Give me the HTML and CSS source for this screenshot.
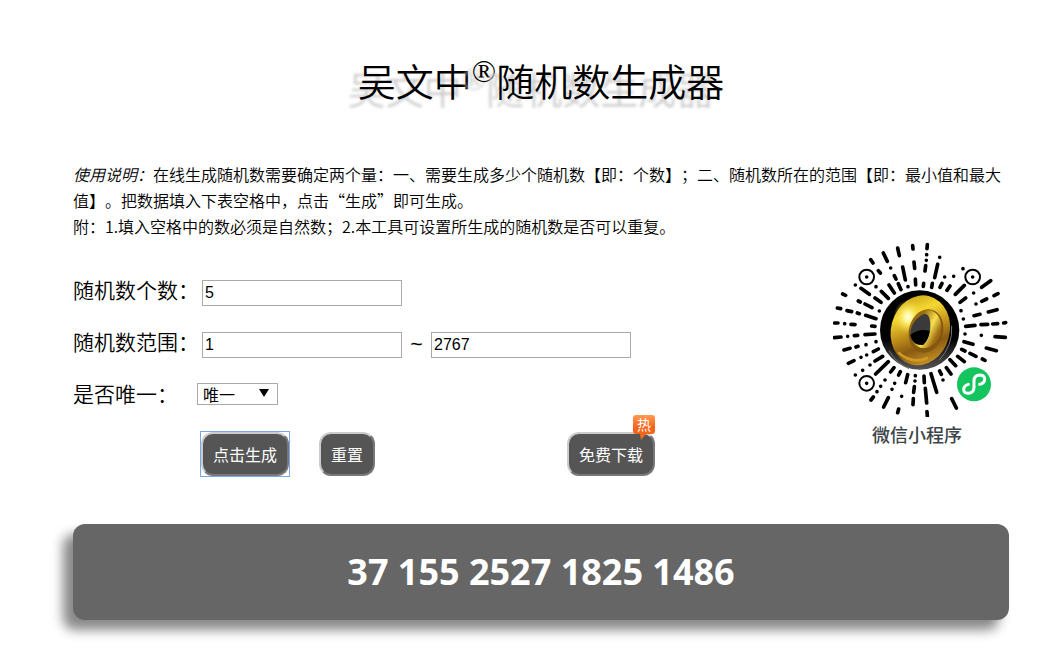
FILE: index.html
```html
<!DOCTYPE html>
<html lang="zh-CN">
  <head>
    <meta charset="UTF-8" />
    <meta name="viewport" content="width=device-width, initial-scale=1.0" />
    <title>吴文中®随机数生成器</title>
    <link rel="stylesheet" href="styles.css">
  </head>
  <body>
    <h1>吴文中<sup>®</sup>随机数生成器</h1>

    <p class="intro">
      <em>使用说明：</em>在线生成随机数需要确定两个量：一、需要生成多少个随机数【即：个数】；二、随机数所在的范围【即：最小值和最大值】。把数据填入下表空格中，点击“生成”即可生成。<br />附：1.填入空格中的数必须是自然数；2.本工具可设置所生成的随机数是否可以重复。
    </p>

    <div class="main">
      <form id="random-form" class="form">
        <div class="row">
          <label for="count">随机数个数：</label>
          <input type="text" id="count" value="5" />
        </div>
        <div class="row">
          <label for="min">随机数范围：</label>
          <input type="text" id="min" value="1" />
          <span class="tilde">~</span>
          <input type="text" id="max" value="2767" aria-label="最大值" />
        </div>
        <div class="row">
          <label for="unique" class="short">是否唯一：</label>
          <div class="select">
            <select id="unique">
              <option value="1">唯一</option>
              <option value="0">不唯一</option>
            </select>
            <svg viewBox="0 0 10 8"><path d="M0 0h10L5 8z" /></svg>
          </div>
        </div>
        <div class="buttons">
          <button type="submit" class="btn active">点击生成</button>
          <button type="reset" class="btn">重置</button>
          <button type="button" class="btn download">
            免费下载
            <svg class="hot" viewBox="0 0 22 25">
              <defs>
                <linearGradient id="hot-bg" x1="0" y1="0" x2="0" y2="1">
                  <stop offset="0" stop-color="#ff9a55" />
                  <stop offset="0.5" stop-color="#f8641a" />
                  <stop offset="1" stop-color="#f06a1c" />
                </linearGradient>
              </defs>
              <path d="M3 0h16q3 0 3 3v13q0 3-3 3h-6l-5 6-1-6H3q-3 0-3-3V3q0-3 3-3z" fill="url(#hot-bg)" />
              <text x="11" y="15">热</text>
            </svg>
          </button>
        </div>
      </form>

      <figure class="qrcode">
        <svg viewBox="24 16 528 528" role="img" aria-label="微信小程序码">
          <defs>
            <linearGradient id="gold" x1="0.1" y1="0" x2="0.7" y2="1">
              <stop offset="0" stop-color="#c2940f" />
              <stop offset="0.3" stop-color="#f3d831" />
              <stop offset="0.55" stop-color="#c08f1a" />
              <stop offset="0.75" stop-color="#8a5a12" />
              <stop offset="1" stop-color="#c99425" />
            </linearGradient>
            <linearGradient id="gold-inner" x1="0" y1="0" x2="1" y2="0.3">
              <stop offset="0.3" stop-color="#9a6c10" />
              <stop offset="0.7" stop-color="#f8e050" />
              <stop offset="1" stop-color="#a06c14" />
            </linearGradient>
            <radialGradient id="shine">
              <stop offset="0" stop-color="#fffff0" />
              <stop offset="0.3" stop-color="#fff48a" />
              <stop offset="1" stop-color="#f2d32c" stop-opacity="0" />
            </radialGradient>
            <linearGradient id="floor" x1="0" y1="0" x2="0" y2="1">
              <stop offset="0.6" stop-color="#000" />
              <stop offset="1" stop-color="#555" />
            </linearGradient>
          </defs>

          <!-- rays, clockwise from the top -->
          <path class="rays" d="
            M307 27L306 39M305 57v0M304 74v0M302 90L300 106M296 143L295 152
            M344 65v0M338 86L329 126M322 143L320 155
            M359 124v0M351 143L345 155
            M414 99v0M386 122v0M375 151L366 164
            M418 149L391 176
            M497 135L470 155M446 172v0M422 187L405 200
            M519 174L507 180M485 190L470 197M453 205v0M408 225v0
            M516 222L490 229M465 236L447 240M415 250v0
            M542 261L536 262M518 264L503 265M488 266L468 267M450 269L422 272
            M541 305L510 303M469 299v0M420 295v0
            M514 345L484 337M444 326L417 318
            M480 374L472 370M453 362L435 353M420 346L410 341
            M418 378L398 362M392 390L375 372M378 415L364 396
            M394 517L380 489M354 433v0M349 416L344 406
            M335 470L318 414
            M307 541L306 528M305 502L301 458M298 441L297 421
            M264 507L265 489M266 470L268 453M270 436v0M271 420v0
            M218 531L221 520M230 482v0M242 441L248 417
            M176 514L190 486M201 461v0M209 443v0M221 418L226 408
            M138 493L145 484M156 468v0M167 452v0M180 433v0M197 409L207 396
            M152 415L190 378
            M91 418v0M113 404v0M135 388v0M150 376L173 362
            M70 383L87 375M108 365v0M125 358v0M145 348L160 340
            M57 343L75 338M93 334L99 332M123 327v0M153 318v0
            M28 306L48 304M68 302v0M88 300L98 299M120 297L150 295
            M29 262L39 262M59 264v0M78 266L90 267M140 271L150 272
            M37 217L47 219M66 225L80 228M97 232L103 234M122 239L153 249
            M53 175L62 179M100 196L106 199M120 205L141 216M163 226v0
            M91 148v0M108 158L133 176M150 187L168 200
            M153 153v0M169 167L190 188
            M137 72L144 82M160 105L166 112M192 148L208 172
            M175 52L187 77M197 97v0M208 120L213 130M220 144L228 162
            M218 37L223 60M233 94L241 133M249 153v0
            M263 30L264 40M267 79L269 98M271 130L272 148" />

          <g class="finders">
            <circle cx="125" cy="124" r="22" />
            <circle cx="443" cy="124" r="22" />
            <circle cx="125" cy="443" r="22" />
          </g>
          <path class="rays" d="M125 124v0M443 124v0M125 443v0" />

          <!-- golden ring -->
          <circle cx="284" cy="283" r="119" fill="url(#floor)" />
          <path d="M192 345q22 38 60 54M380 270q4 60-38 104" fill="none" stroke="#777" stroke-width="3" />
          <ellipse cx="286" cy="284" rx="88" ry="106" transform="rotate(15 286 284)" fill="url(#gold)" />
          <ellipse cx="249" cy="244" rx="44" ry="52" fill="url(#shine)" />
          <ellipse cx="303" cy="286" rx="51" ry="66" transform="rotate(15 303 286)" fill="#85580f" />
          <ellipse cx="302" cy="280" rx="46" ry="58" transform="rotate(15 302 280)" fill="url(#gold-inner)" />
          <path d="M256 300q-2-40 38-64q20-6 22 28q2 40-22 64q-34 0-38-28z" fill="#3a3a3a" />
          <path d="M256 298q28-22 58-12q-3 26-20 42q-32 0-38-30z" fill="#000" />
          <path d="M222 352q38 34 84 16" fill="none" stroke="#cf9a24" stroke-width="8" stroke-linecap="round" />

          <!-- mini program mark -->
          <circle cx="447" cy="446" r="51" fill="#13c45f" />
          <path d="M430 446q-14 4-14 15q1 13 16 12q15-2 15-18v-20q0-15 16-17q16 0 16 13q-1 12-15 15" fill="none" stroke="#fff" stroke-width="9" stroke-linecap="round" />
        </svg>
        <figcaption>微信小程序</figcaption>
      </figure>
    </div>

    <output class="result" form="random-form">37 155 2527 1825 1486</output>
  </body>
</html>
```
FILE: styles.css
```css
* {
  box-sizing: border-box;
}
body {
  margin: 0;
  padding: 52px 37px 30px 73px;
  background: #fff;
  color: #000;
  font-family: "Open Sans", "Noto Sans CJK SC", sans-serif;
  font-size: 16px;
  overflow-x: hidden;
}
h1 {
  margin: 0 0 53px;
  font-family: "Noto Sans CJK SC", sans-serif;
  font-size: 38px;
  font-weight: 350;
  line-height: 56px;
  text-align: center;
  text-shadow: -10px 8px 3px #ccc;
}
h1 sup {
  font-family: "Liberation Serif", serif;
  font-size: 32px;
  line-height: 0;
  vertical-align: 14px;
}
.intro {
  margin: 0;
  font-family: "Noto Sans CJK SC", sans-serif;
  font-weight: 350;
  line-height: 26px;
  text-spacing-trim: space-all;
}
.main {
  display: flex;
  justify-content: space-between;
  align-items: flex-start;
}
.form {
  padding-top: 28px;
}
.row {
  display: flex;
  align-items: center;
  height: 52px;
}
.row label {
  width: 129px;
  padding-bottom: 8px;
  font-family: "Noto Sans CJK SC", sans-serif;
  font-size: 21px;
  font-weight: 350;
  line-height: 32px;
  white-space: nowrap;
}
.row label.short {
  width: 124px;
}
.row input {
  width: 200px;
  height: 26px;
  padding: 0 2px;
  border: 1px solid #a9a9a9;
  background: #fff;
  font-family: "Liberation Sans", sans-serif;
  font-size: 16px;
}
.tilde {
  width: 29px;
  padding-bottom: 4px;
  font-size: 22px;
  text-align: center;
}
.select {
  position: relative;
  margin-bottom: 6px;
}
.select select {
  display: block;
  width: 81px;
  height: 22px;
  padding: 0 5px;
  border: 1px solid #a9a9a9;
  border-radius: 0;
  background: #fff;
  appearance: none;
  font-family: "Noto Sans CJK SC", sans-serif;
  font-size: 16px;
  line-height: 20px;
}
.select svg {
  position: absolute;
  top: 6px;
  right: 9px;
  width: 10px;
  height: 8px;
  pointer-events: none;
}
.buttons {
  display: flex;
  padding: 9px 0 0 128px;
}
.btn {
  position: relative;
  height: 44px;
  margin-right: 30px;
  padding: 0 10px;
  border: 2px outset #ccc;
  border-radius: 12px;
  background: #555;
  color: #fff;
  font-family: "Noto Sans CJK SC", sans-serif;
  font-size: 16px;
  cursor: pointer;
}
.btn:hover {
  background: #666;
}
.btn.active::before {
  content: "";
  position: absolute;
  inset: -3px;
  border: 1px solid #7ba7e8;
}
.btn.download {
  margin: 0 0 0 162px;
}
.hot {
  position: absolute;
  top: -19px;
  right: -2px;
  width: 22px;
  height: 25px;
  overflow: visible;
}
.hot text {
  fill: #fff;
  font-size: 14px;
  text-anchor: middle;
}
.qrcode {
  width: 176px;
  margin: 2px 0 0;
  text-align: center;
}
.qrcode svg {
  display: block;
  width: 100%;
}
.rays {
  fill: none;
  stroke: #000;
  stroke-width: 11;
  stroke-linecap: round;
}
.finders {
  fill: #fff;
  stroke: #000;
  stroke-width: 6;
}
.qrcode figcaption {
  margin-top: 3px;
  padding-right: 8px;
  color: #3d4548;
  font-family: "Noto Sans CJK SC", sans-serif;
  font-size: 18px;
  font-weight: 500;
  line-height: 28px;
}
.result {
  display: block;
  margin-top: 48px;
  padding: 24px;
  border-radius: 12px;
  background: #666;
  box-shadow: -10px 10px 12px #888;
  color: #fff;
  font-size: 36px;
  font-weight: bold;
  line-height: 48px;
  text-align: center;
}
```
